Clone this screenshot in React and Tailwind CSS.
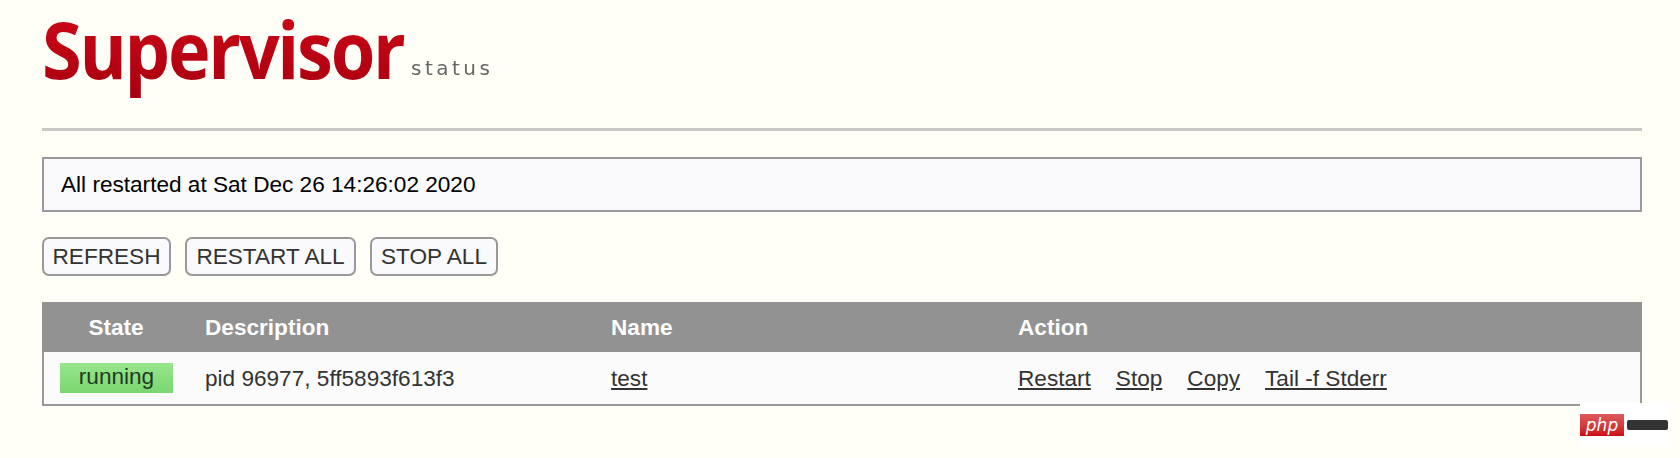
import React from "react";

const sans = "font-['Liberation_Sans',Arial,sans-serif]";
const btn = "flex h-[39px] items-center justify-center rounded-[7px] border-2 border-[#999] bg-[#fafafc] pt-[1px]";

export default function App() {
  return (
    <div className={`relative h-[458px] overflow-hidden bg-[#fffff8] ${sans} text-[22.6px] text-[#333]`}>
      <div className="pl-[42px] pr-[38px]">
        {/* header logo */}
        <div className="flex h-[128px] items-start">
          <div className="-mt-[3px] w-[369px] shrink-0">
            <span className="inline-block origin-left scale-x-[0.925] bg-gradient-to-b from-[#d40a18] to-[#a60010] bg-clip-text pr-[8px] font-['Open_Sans',sans-serif] text-[78px] leading-[104px] font-bold tracking-[-2.5px] text-transparent blur-[0.6px]">
              Supervisor
            </span>
          </div>
          <span className="mt-[53px] font-['DejaVu_Sans',sans-serif] text-[20px] leading-[30px] font-medium tracking-[3.5px] text-[#666] blur-[0.4px]">
            status
          </span>
        </div>
        <div className="h-[3px] bg-[#c8c8c6]" />

        {/* message */}
        <div className="mt-[26px] flex h-[55px] items-center border-2 border-[#9a9a9e] bg-[#fafafc] px-[17px] text-black">
          All restarted at Sat Dec 26 14:26:02 2020
        </div>

        {/* buttons */}
        <div className="mt-[25px] flex gap-[14px]">
          <a className={`${btn} w-[129px]`}>REFRESH</a>
          <a className={`${btn} w-[171px]`}>RESTART ALL</a>
          <a className={`${btn} w-[128px]`}>STOP ALL</a>
        </div>

        {/* process table */}
        <div className="mt-[26px] border-2 border-t-0 border-[#999]">
          <div className="-mx-[2px] flex h-[50px] items-center bg-[#929292] pt-[2px] font-bold text-white">
            <div className="mr-[15px] w-[148px] text-center">State</div>
            <div className="w-[406px]">Description</div>
            <div className="w-[407px]">Name</div>
            <div>Action</div>
          </div>
          <div className="flex h-[52px] items-center bg-[#fbfbfc] pt-[2px]">
            <div className="-mt-[2px] w-[161px] pl-[16px]">
              <div className="h-[30px] w-[113px] bg-gradient-to-b from-[#98e58c] to-[#7ad670] text-center leading-[28px] text-[#1f3a1f]">running</div>
            </div>
            <div className="w-[406px]">pid 96977, 5ff5893f613f3</div>
            <div className="w-[407px]"><a className="underline">test</a></div>
            <div className="flex gap-[25px]">
              <a className="underline">Restart</a>
              <a className="underline">Stop</a>
              <a className="underline">Copy</a>
              <a className="underline">Tail -f Stderr</a>
            </div>
          </div>
        </div>
      </div>

      {/* site watermark */}
      <div className="absolute top-[403px] left-[1580px] flex h-[44px] w-[90px] items-center bg-white">
        <div className="flex h-[22px] w-[44px] items-center justify-center bg-gradient-to-b from-[#dc5a5e] to-[#cc0610] font-['DejaVu_Sans',sans-serif] text-[17px] leading-none font-light text-white italic">php</div>
        <div className="ml-[3px] h-[10px] w-[41px] rounded-[2px] bg-[#333]" />
      </div>
    </div>
  );
}
